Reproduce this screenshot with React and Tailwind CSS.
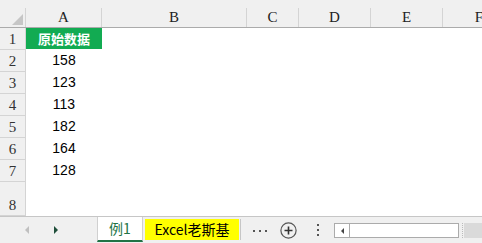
import React from "react";

const serif = { fontFamily: '"Liberation Serif", "Noto Sans CJK SC", serif' };
const sans = { fontFamily: '"Liberation Sans", "Noto Sans CJK SC", sans-serif' };
const cjk = { fontFamily: '"Noto Sans CJK SC", sans-serif' };

const cols = [
  { l: "A", w: "w-[76px]" },
  { l: "B", w: "w-[145px]" },
  { l: "C", w: "w-[52px]" },
  { l: "D", w: "w-[72px]" },
  { l: "E", w: "w-[72px]" },
  { l: "F", w: "w-[72px]", nb: true },
];

const data = ["158", "123", "113", "182", "164", "128"];

function RowHead({ n, h = "h-[22px]" }) {
  return (
    <div
      className={`w-[26px] ${h} shrink-0 bg-[#f0f0f0] border-r border-b border-[#d4d4d4] flex items-end justify-center pb-[2px] text-[15px] leading-none text-[#333]`}
      style={serif}
    >
      {n}
    </div>
  );
}

export default function App() {
  return (
    <div className="w-[482px] h-[243px] bg-white overflow-hidden flex flex-col">
      {/* column headers */}
      <div className="flex items-end h-[28px] shrink-0 bg-[#f0f0f0] border-b border-[#ababab]">
        <div className="w-[26px] h-[19px] shrink-0 border-r border-[#d4d4d4] relative">
          <div className="absolute right-[2px] bottom-[2px] w-0 h-0 border-l-[11px] border-l-transparent border-b-[11px] border-b-[#c6c6c6]" />
        </div>
        {cols.map((c) => (
          <div
            key={c.l}
            className={`${c.w} h-[19px] shrink-0 ${c.nb ? "" : "border-r border-[#d4d4d4]"} flex items-center justify-center text-[15px] leading-none text-[#222]`}
            style={serif}
          >
            {c.l}
          </div>
        ))}
      </div>

      {/* row 1 */}
      <div className="flex h-[22px] shrink-0">
        <RowHead n="1" />
        <div
          className="w-[76px] h-[21px] bg-[#12ab52] text-white font-bold text-[13px] flex items-center justify-center"
          style={cjk}
        >
          原始数据
        </div>
      </div>

      {data.map((d, i) => (
        <div key={i} className="flex h-[22px] shrink-0">
          <RowHead n={String(i + 2)} />
          <div
            className="w-[76px] h-[21px] flex items-center justify-center text-[14px] text-black"
            style={sans}
          >
            {d}
          </div>
        </div>
      ))}

      {/* row 8 */}
      <div className="flex h-[34px] shrink-0">
        <RowHead n="8" h="h-[34px]" />
        <div className="flex-1" />
      </div>

      {/* sheet tab bar */}
      <div className="flex h-[27px] shrink-0 bg-[#f0f0f0] border-t border-[#c6c6c6]">
        <div className="w-[97px] shrink-0 flex items-center">
          <div className="ml-[25px] w-0 h-0 border-y-[4px] border-y-transparent border-r-[4px] border-r-[#c0c0c0]" />
          <div className="ml-[25px] w-0 h-0 border-y-[4px] border-y-transparent border-l-[4px] border-l-[#1f4f3a]" />
        </div>
        <div
          className="w-[46px] h-[25px] shrink-0 bg-white border-x border-[#d0d0d0] border-b-[2px] border-b-[#217346] flex items-center justify-center text-[14px] text-[#217346]"
          style={cjk}
        >
          例1
        </div>
        <div className="ml-[2px] mt-[2px] w-[94px] h-[21px] shrink-0 bg-[#ffff00] flex items-center justify-center text-[14px] text-black" style={cjk}>
          Excel老斯基
        </div>
        <div className="ml-[1px] mt-[2px] w-px h-[21px] bg-[#c6c6c6] shrink-0" />
        <div className="ml-[12px] mt-[2px] flex items-center gap-[4px] shrink-0">
          <div className="w-[2px] h-[2px] bg-[#555]" />
          <div className="w-[2px] h-[2px] bg-[#555]" />
          <div className="w-[2px] h-[2px] bg-[#555]" />
        </div>
        <div className="ml-[13px] flex items-center shrink-0">
          <svg width="17" height="17" viewBox="0 0 17 17">
            <circle cx="8.5" cy="8.5" r="7.6" fill="none" stroke="#555" strokeWidth="1.2" />
            <path d="M8.5 4.5v8M4.5 8.5h8" stroke="#333" strokeWidth="1.6" />
          </svg>
        </div>
        <div className="ml-[20px] flex flex-col justify-center gap-[3px] shrink-0">
          <div className="w-[2px] h-[2px] bg-[#555]" />
          <div className="w-[2px] h-[2px] bg-[#555]" />
          <div className="w-[2px] h-[2px] bg-[#555]" />
        </div>
        <div className="ml-[15px] mt-[6px] w-[125px] h-[15px] shrink-0 bg-white border border-[#ababab] flex">
          <div className="w-[15px] h-full border-r border-[#ababab] flex items-center justify-center">
            <div className="w-0 h-0 border-y-[3px] border-y-transparent border-r-[3px] border-r-[#444]" />
          </div>
        </div>
        <div className="ml-[3px] mt-[6px] w-px h-[15px] border-l border-dotted border-[#bbb] shrink-0" />
        <div className="ml-[1px] mt-[6px] flex-1 h-[15px] bg-[#dadada]" />
      </div>
    </div>
  );
}
